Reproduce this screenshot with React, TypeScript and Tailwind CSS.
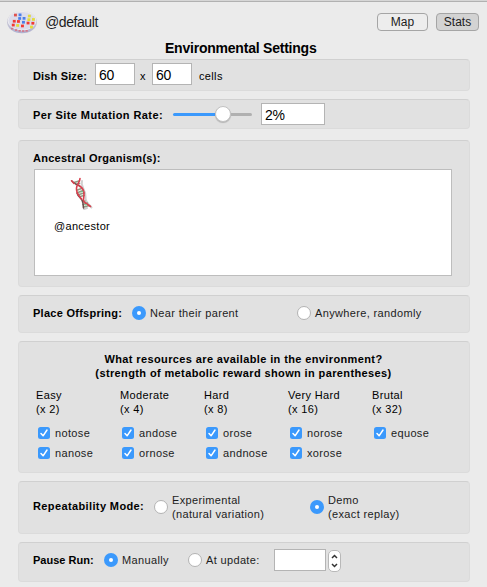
import React from "react";

const panel =
  "flex w-[452px] rounded-[4px] border border-[#dbdbdb] border-t-[#d0d0d0] bg-[#e1e1e1] shrink-0";

function Label({ children, className = "" }: { children: React.ReactNode; className?: string }) {
  return <span className={`shrink-0 whitespace-nowrap font-bold ${className}`}>{children}</span>;
}

function Radio({ on = false }: { on?: boolean }) {
  return on ? (
    <span className="flex size-[14px] shrink-0 items-center justify-center rounded-full bg-[#3b99fc]">
      <span className="size-[4px] rounded-full bg-white" />
    </span>
  ) : (
    <span className="size-[14px] shrink-0 rounded-full border border-[#b3b3b3] bg-white" />
  );
}

function RadioOption({
  on,
  className = "",
  children,
}: {
  on?: boolean;
  className?: string;
  children: React.ReactNode;
}) {
  return (
    <label className={`flex shrink-0 items-center gap-1 whitespace-nowrap text-[#1c1c1c] ${className}`}>
      <Radio on={on} />
      <span>{children}</span>
    </label>
  );
}

function Field({ value = "", className = "" }: { value?: string; className?: string }) {
  return (
    <span
      className={`flex h-[22px] shrink-0 items-center border border-[#b4b4b4] bg-white pl-[3px] pt-px text-[14px] tracking-[-0.2px] ${className}`}
    >
      {value}
    </span>
  );
}

function Check({ name }: { name: string }) {
  return (
    <label className="flex h-5 items-center gap-[5px] text-[#1c1c1c]">
      <svg width="12" height="12" viewBox="0 0 12 12" className="ml-[2px] shrink-0">
        <rect width="12" height="12" rx="2.5" fill="#3b99fc" />
        <path d="M3 6.5 L5.1 8.8 L9 3" fill="none" stroke="#fff" strokeWidth="1.5" strokeLinecap="round" strokeLinejoin="round" />
      </svg>
      {name}
    </label>
  );
}

const RED = "#f23a34";
const BLUE = "#4c7fe8";
const YELLOW = "#e3dc3a";
const PINK = "#d2788a";

const cells: [number, number, string][] = [
  [8.6, 5, "#e0524c"], [13.2, 4.8, BLUE], [22.5, 6, YELLOW],
  [12.8, 8.4, BLUE], [17.2, 8.3, BLUE], [22, 9.6, YELLOW], [26.6, 9.4, YELLOW],
  [7.4, 11.2, RED], [11.6, 11.4, RED], [16.6, 12.2, BLUE], [21.2, 13, RED],
  [6.4, 15, RED], [26, 13.2, RED],
  [10.8, 15.4, YELLOW], [15.6, 15.9, RED], [24.6, 17, YELLOW],
];

const rim: [number, number][] = [[5, 17.8], [9, 19.2], [12.5, 20], [16, 20.2], [19.5, 20]];

function DishIcon() {
  return (
    <svg width="32" height="24" viewBox="0 0 32 24" className="shrink-0">
      <defs>
        <linearGradient id="dish" x1="0" y1="0" x2="0" y2="1">
          <stop offset="0" stopColor="#e2dedc" />
          <stop offset="1" stopColor="#aeb0d0" />
        </linearGradient>
      </defs>
      <ellipse cx="16" cy="12" rx="15" ry="11.3" fill="url(#dish)" />
      <ellipse cx="16" cy="10.8" rx="14" ry="9.4" fill="#dcdcea" stroke="#f4f4f4" strokeWidth="0.7" />
      {rim.map(([x, y], i) => (
        <rect key={i} x={x} y={y} width="2.3" height="1.7" fill={PINK} />
      ))}
      {cells.map(([x, y, c], i) => (
        <rect key={i} x={x - 0.6} y={y - 1.3} width="2.9" height="2.7" fill={c} />
      ))}
    </svg>
  );
}

function DnaIcon() {
  return (
    <svg width="24" height="36" viewBox="0 0 24 36">
      <g fill="none" strokeLinecap="round">
        <path d="M13 5 C11 11 17 13 16.5 21 C16 27 21 29 22.5 31.5 M15 33 L18 32" stroke="#d0d0d0" strokeWidth="2" />
        <path d="M5 6.5 L10 5 M7 8.5 L10.5 7.5 M8.5 14 L12.5 12.5 M9 16.5 L14 14.5 M10 18.5 L15 17 M11 20.5 L15 19.5 M13.5 26 L16 25 M14 28.5 L18.5 27 M14.5 31 L20.5 29.5" stroke="#8f9d84" strokeWidth="1.6" />
        <path d="M3 5 C5 8.5 9 8 11 10.5 M8 17 C9 21 13 22 13.8 26 L14.5 32" stroke="#6d4c4a" strokeWidth="1.5" />
        <path d="M2.5 4.8 L5 7.5 M11 2.5 C11 6 8 8 7.5 12 C7 18 10.5 20 12.5 23" stroke="#d8404e" strokeWidth="1.6" />
        <path d="M10 9.5 C14 12 15.5 15 15 19 C14.5 23.5 13.5 25 16.5 27 L21.5 30.5" stroke="#d8404e" strokeWidth="1.6" />
        <path d="M12 16 L14 15.5 M16 29 L17.5 28.5" stroke="#6fc08c" strokeWidth="1" />
      </g>
    </svg>
  );
}

const resources = [
  { level: "Easy", reward: "(x 2)", names: ["notose", "nanose"] },
  { level: "Moderate", reward: "(x 4)", names: ["andose", "ornose"] },
  { level: "Hard", reward: "(x 8)", names: ["orose", "andnose"] },
  { level: "Very Hard", reward: "(x 16)", names: ["norose", "xorose"] },
  { level: "Brutal", reward: "(x 32)", names: ["equose"] },
];

const headerButton =
  "flex h-[18px] items-center justify-center rounded-[4px] border border-[#a5a5a5] text-[12px] tracking-normal text-[#1c1c1c]";

export default function App() {
  return (
    <div className="flex h-[587px] w-[487px] flex-col overflow-hidden bg-[#ebebeb] font-['Liberation_Sans',Arial,sans-serif] text-[11px] leading-[14px] tracking-[0.35px] text-black">
      <div className="h-[2px] shrink-0 border-b border-[#b1b1b1] bg-[#d6d6d6]" />
      <header className="flex h-[38px] shrink-0 items-center pl-[6px] pr-[8px] pt-[2px]">
        <DishIcon />
        <span className="ml-[7px] text-[14px] tracking-[-0.42px] text-[#1c1c1c]">@default</span>
        <button className={`${headerButton} ml-auto w-[51px] bg-[#ededed]`}>Map</button>
        <button className={`${headerButton} ml-[8px] w-[43px] bg-[#d3d3d3]`}>Stats</button>
      </header>
      <h1 className="h-[19px] shrink-0 pl-[165px] text-[14px] font-bold leading-[17px] tracking-[-0.22px]">Environmental Settings</h1>

      <main className="flex flex-col gap-2 pl-[18px]">
        <section className={`${panel} h-[32px] items-start pl-[14px] pt-[3px]`}>
          <Label className="mt-[6px] w-[62px] tracking-[0.15px]">Dish Size:</Label>
          <Field value="60" className="w-[40px]" />
          <span className="mt-[6px] w-[17px] pl-[5px]">x</span>
          <Field value="60" className="w-[40px]" />
          <span className="ml-[7px] mt-[6px]">cells</span>
        </section>

        <section className={`${panel} h-[30px] items-start pl-[14px] pt-[3px]`}>
          <Label className="mt-[5px] w-[140px] tracking-[0.42px]">Per Site Mutation Rate:</Label>
          <span className="flex h-[22px] w-[88px] items-center">
            <span className="h-[3px] w-[42px] rounded-l-full bg-[#3b99fc]" />
            <span className="size-[16px] shrink-0 rounded-full border border-[#c2c2c2] bg-white shadow-[0_1px_1px_rgba(0,0,0,0.2)]" />
            <span className="h-[3px] w-[21px] rounded-r-full bg-[#b0b0b0]" />
          </span>
          <Field value="2%" className="w-[64px]" />
        </section>

        <section className={`${panel} mt-[3px] h-[147px] flex-col pl-[15px] pt-[10px]`}>
          <Label className="-ml-px h-[18px] tracking-[0.27px]">Ancestral Organism(s):</Label>
          <div className="flex h-[107px] w-[418px] items-start border border-[#bdbdbd] bg-white pl-[19px] pt-[6px]">
            <div className="flex w-[57px] flex-col">
              <span className="ml-[15px] h-[43px]"><DnaIcon /></span>
              <span className="tracking-[0.3px]">@ancestor</span>
            </div>
          </div>
        </section>

        <section className={`${panel} h-[38px] items-center pb-[2px] pl-[14px]`}>
          <Label className="w-[99px] tracking-[0.27px]">Place Offspring:</Label>
          <RadioOption on className="w-[165px]">Near their parent</RadioOption>
          <RadioOption>Anywhere, randomly</RadioOption>
        </section>

        <section className={`${panel} h-[132px] flex-col pl-[17px] pt-[10px]`}>
          <p className="w-[415px] text-center font-bold tracking-[0.38px]">
            What resources are available in the environment?
            <br />
            (strength of metabolic reward shown in parentheses)
          </p>
          <div className="mt-[8px] grid grid-cols-[repeat(5,84px)]">
            {resources.map((r) => (
              <div key={r.level}>
                <p className="mb-[7px]">{r.level}<br />{r.reward}</p>
                {r.names.map((n) => (
                  <Check key={n} name={n} />
                ))}
              </div>
            ))}
          </div>
        </section>

        <section className={`${panel} h-[53px] items-center pb-[2px] pl-[14px]`}>
          <Label className="w-[121px] pb-px tracking-[0.38px]">Repeatability Mode:</Label>
          <RadioOption className="w-[156px]">Experimental<br />(natural variation)</RadioOption>
          <RadioOption on>Demo<br />(exact replay)</RadioOption>
        </section>

        <section className={`${panel} h-[40px] items-start pl-[14px] pt-[6px]`}>
          <Label className="mt-[4px] w-[71px] tracking-[0.02px]">Pause Run:</Label>
          <RadioOption on className="mt-[4px] w-[84px]">Manually</RadioOption>
          <RadioOption className="mt-[4px] w-[86px]">At update:</RadioOption>
          <Field className="w-[52px]" />
          <span className="ml-[2px] mt-px flex h-[22px] w-[13px] items-center justify-center rounded-[5px] border border-[#b8b8b8] bg-white">
            <svg width="11" height="20" viewBox="0 0 11 20" className="shrink-0" fill="none" stroke="#333" strokeWidth="1.5">
              <path d="M3 7 L5.5 4.5 L8 7 M3 13 L5.5 15.5 L8 13" />
            </svg>
          </span>
        </section>
      </main>
    </div>
  );
}
